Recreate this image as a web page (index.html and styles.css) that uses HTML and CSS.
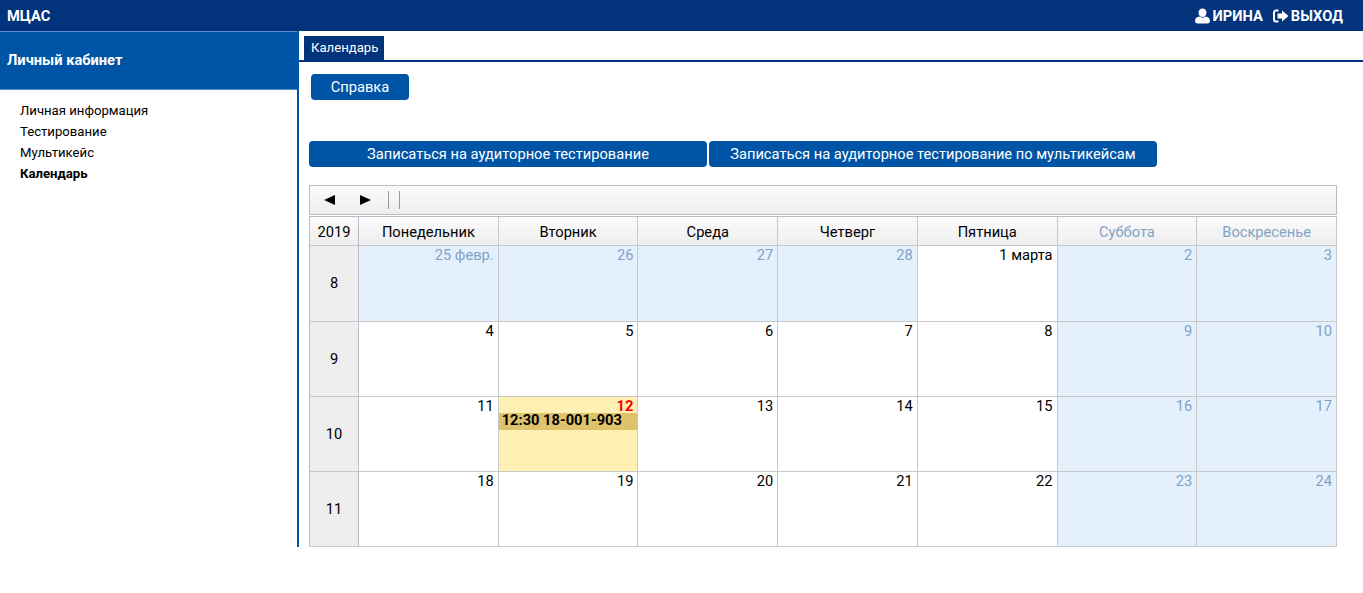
FILE: index.html
```html
<!DOCTYPE html>
<html lang="ru">
<head>
<meta charset="utf-8">
<title>МЦАС</title>
<link rel="stylesheet" href="styles.css">
</head>
<body>
<header class="topbar">
  <div class="brand">МЦАС</div>
  <nav class="user">
    <span class="user-item">
      <svg class="ico-user" viewBox="0 0 16 16"><path d="M8 0.500c2.400 0 4 1.800 4 4.200S10.400 9 8 9 4 7.100 4 4.700 5.600 0.500 8 0.500zM5 8.600c.8.7 1.900 1.100 3 1.100s2.200-.4 3-1.100c2.700.2 4.500 1.800 4.500 4.400 0 1.600-1 2.500-2.500 2.500H3c-1.500 0-2.500-.9-2.500-2.500 0-2.600 1.800-4.200 4.500-4.400z" fill="#fff"/></svg>ИРИНА
    </span>
    <span class="user-item">
      <svg class="ico-exit" viewBox="0 0 16 14"><path d="M5.500 1.500H3A2 2 0 0 0 1 3.500v7a2 2 0 0 0 2 2h2.500" fill="none" stroke="#fff" stroke-width="2"/><path d="M9 1.500L15.500 7 9 12.500V9.500H4.500v-5H9z" fill="#fff"/></svg>ВЫХОД
    </span>
  </nav>
</header>
<div class="layout">
  <aside class="sidebar">
    <div class="side-title">Личный кабинет</div>
    <ul class="side-menu">
      <li>Личная информация</li>
      <li>Тестирование</li>
      <li>Мультикейс</li>
      <li class="current">Календарь</li>
    </ul>
  </aside>
  <main class="content">
    <div class="tabs"><span class="tab">Календарь</span></div>
    <div class="help-row"><button class="btn btn-help">Справка</button></div>
    <div class="action-row">
      <button class="btn btn-a">Записаться на аудиторное тестирование</button>
      <button class="btn btn-b">Записаться на аудиторное тестирование по мультикейсам</button>
    </div>
    <div class="toolbar">
      <span class="arrow arrow-l"></span>
      <span class="arrow arrow-r"></span>
      <span class="sep sep-a"></span>
      <span class="sep sep-b"></span>
    </div>
    <div class="calendar">
      <div class="hd">2019</div>
      <div class="hd">Понедельник</div>
      <div class="hd">Вторник</div>
      <div class="hd">Среда</div>
      <div class="hd">Четверг</div>
      <div class="hd">Пятница</div>
      <div class="hd we">Суббота</div>
      <div class="hd we">Воскресенье</div>

      <div class="wk">8</div>
      <div class="day off">25 февр.</div>
      <div class="day off">26</div>
      <div class="day off">27</div>
      <div class="day off">28</div>
      <div class="day">1 марта</div>
      <div class="day off">2</div>
      <div class="day off">3</div>

      <div class="wk">9</div>
      <div class="day">4</div>
      <div class="day">5</div>
      <div class="day">6</div>
      <div class="day">7</div>
      <div class="day">8</div>
      <div class="day off">9</div>
      <div class="day off">10</div>

      <div class="wk">10</div>
      <div class="day">11</div>
      <div class="day today"><span class="today-num">12</span><div class="event">12:30 18-001-903</div></div>
      <div class="day">13</div>
      <div class="day">14</div>
      <div class="day">15</div>
      <div class="day off">16</div>
      <div class="day off">17</div>

      <div class="wk">11</div>
      <div class="day">18</div>
      <div class="day">19</div>
      <div class="day">20</div>
      <div class="day">21</div>
      <div class="day">22</div>
      <div class="day off">23</div>
      <div class="day off">24</div>
    </div>
  </main>
</div>
</body>
</html>
```
FILE: styles.css
```css
* { box-sizing: border-box; }
html, body { margin: 0; padding: 0; }
body { font-family: Roboto, "Liberation Sans", sans-serif; font-size: 14.67px; color: #000; background: #fff; }

.topbar { height: 31px; background: #03337a; color: #fff; display: flex; justify-content: space-between; align-items: center; padding: 0 20px 0 7px; font-weight: 700; }
.brand { font-size: 14.67px; }
.user { display: flex; gap: 10px; font-size: 14.67px; }
.user-item { display: flex; align-items: center; gap: 2px; }
.ico-user { width: 17px; height: 16px; }
.ico-exit { width: 16px; height: 14px; }

.layout { display: flex; align-items: flex-start; }
.sidebar { width: 299px; height: 516px; flex: none; border-right: 2px solid #0054a6; }
.side-title { height: 59px; background: #0054a6; border-top: 1px solid #5c8fd0; border-bottom: 1px solid #5c8fd0; color: #fff; font-weight: 700; font-size: 14.67px; padding: 0 7px; line-height: 57px; }
.side-menu { list-style: none; margin: 0; padding: 10px 0 0 20px; font-size: 13.15px; line-height: 21px; }
.current { font-weight: 700; }

.content { width: 1064px; flex: none; }
.tabs { height: 31px; padding: 5px 0 0 5px; border-bottom: 2px solid #03337a; }
.tab { display: inline-block; height: 24px; line-height: 24px; padding: 0 6px 0 7px; background: #03337a; color: #fff; font-size: 13.15px; }

.btn { display: block; height: 26px; border: 0; padding: 0; border-radius: 4px; background: #0054a6; color: #fff; font-family: inherit; font-size: 14.67px; text-align: center; }
.help-row { padding: 12px 0 0 12px; }
.btn-help { width: 98px; }
.action-row { display: flex; gap: 2px; padding: 41px 0 0 10px; }
.btn-a { width: 398px; }
.btn-b { width: 448px; }

.toolbar { margin: 18px 0 0 10px; width: 1028px; height: 30px; border: 1px solid #b8bcc8; background: linear-gradient(#fbfbfb, #eeeeee); display: flex; align-items: center; }
.arrow { width: 0; height: 0; border-top: 5px solid transparent; border-bottom: 5px solid transparent; }
.arrow-l { margin-left: 14px; border-right: 11px solid #000; }
.arrow-r { margin-left: 25px; border-left: 11px solid #000; }
.sep { width: 1px; height: 18px; background: #999; }
.sep-a { margin-left: 17px; }
.sep-b { margin-left: 10px; }

.calendar { margin: 1px 0 0 10px; width: 1028px; display: grid; grid-template-columns: 50px repeat(7, 1fr); grid-template-rows: 29px 76px 75px 75px 75px; border-top: 1px solid #b8bcc8; }
.hd { display: flex; align-items: center; justify-content: center; background: linear-gradient(#fbfbfb, #eeeeee); border-right: 1px solid #c8c8c8; border-bottom: 1px solid #c8c8c8; padding-top: 1px; }
.hd:first-child { border-left: 1px solid #b8bcc8; border-right-color: #b8bcc8; }
.hd.we { color: #7fa3c8; }
.hd:last-of-type { border-right-color: #b8bcc8; }
.wk { display: flex; align-items: center; justify-content: center; background: #eeeeee; border-left: 1px solid #b8bcc8; border-right: 1px solid #b8bcc8; border-bottom: 1px solid #c8c8c8; padding-bottom: 1px; }
.day { text-align: right; padding: 1px 4px 0 0; line-height: 16px; border-right: 1px solid #c8c8c8; border-bottom: 1px solid #c8c8c8; }
.off { background: #e4f0fc; color: #7fa3c8; }
.today { background: #feefb3; padding: 0; }
.today-num { display: block; height: 16px; padding: 1px 4px 0 0; color: #f00; font-weight: 700; }
.event { text-align: left; height: 17px; line-height: 15px; padding-left: 3px; background: #dfc26c; font-weight: 700; }
```
